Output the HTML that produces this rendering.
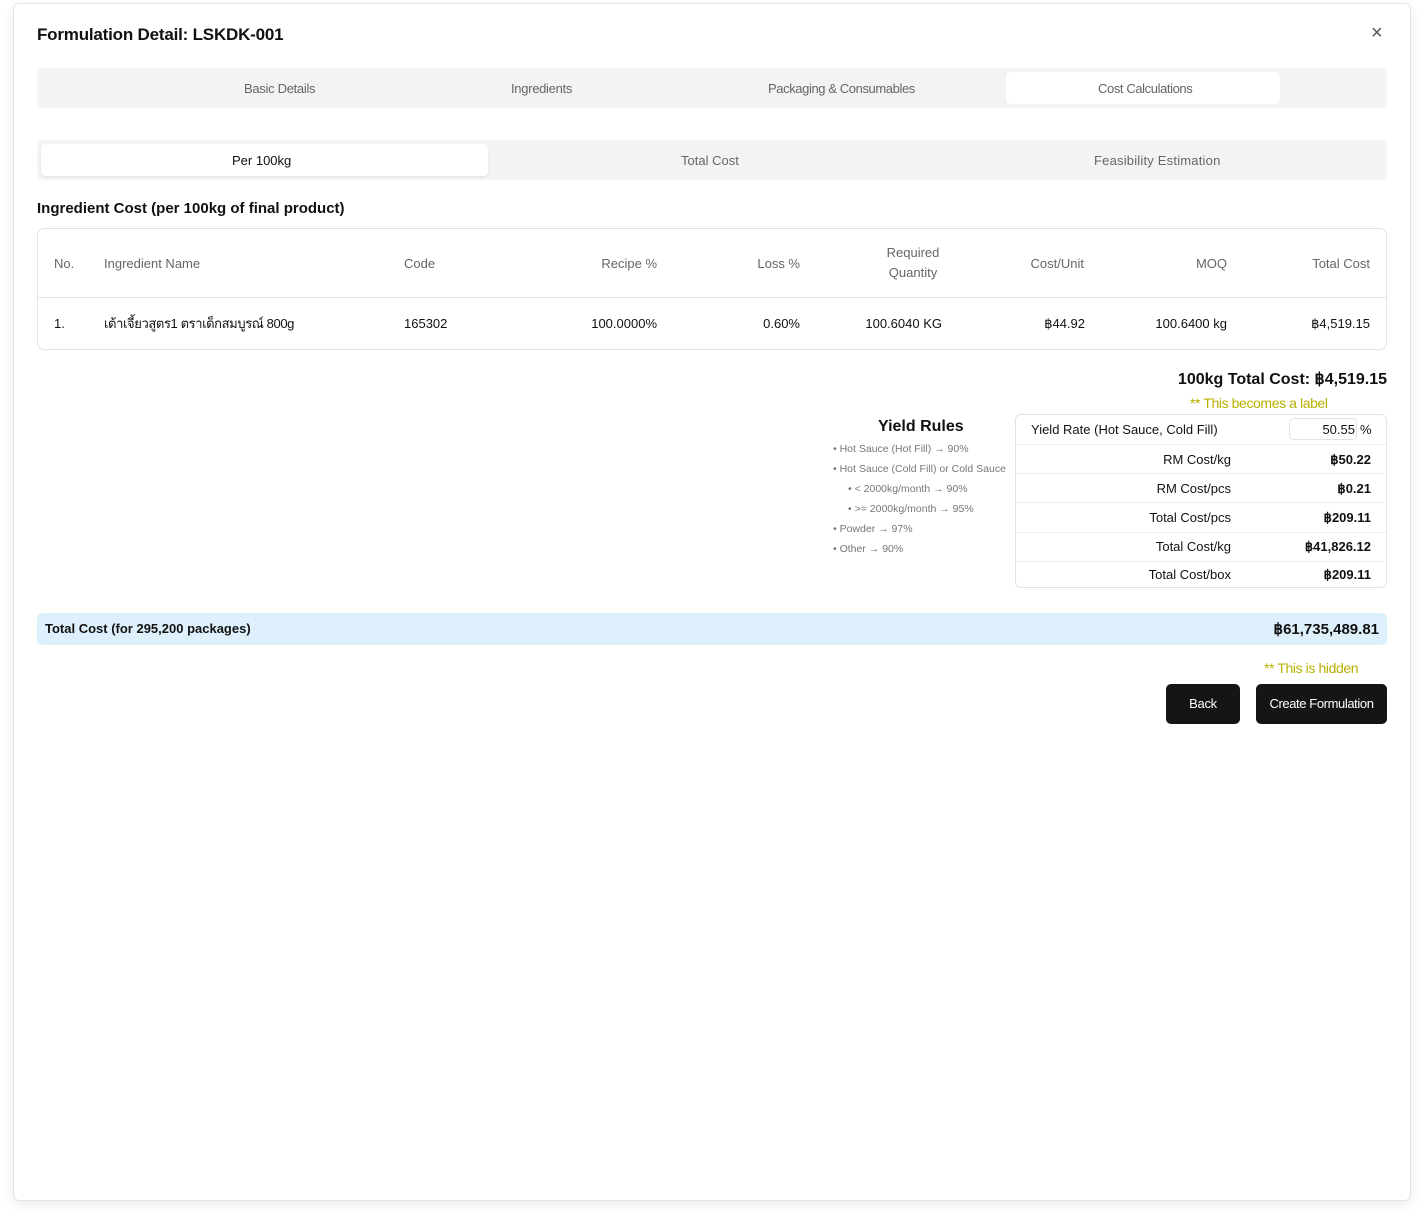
<!DOCTYPE html>
<html><head><meta charset="utf-8"><style>
*{box-sizing:border-box;margin:0;padding:0}
body{width:1424px;height:1224px;background:#fff;font-family:"Liberation Sans","Noto Sans CJK SC",sans-serif;color:#111;position:relative;overflow:hidden}
.abs{position:absolute}
.card{left:13px;top:3px;width:1398px;height:1198px;border:1px solid #e4e4e4;border-radius:6px;box-shadow:0 4px 12px rgba(0,0,0,.08);background:#fff}
.t{white-space:nowrap}
.r{text-align:right}
.g{color:#666}
</style></head><body>
<div class="abs card"></div>
<div class="abs t" style="left:37px;top:25px;font-size:17px;font-weight:bold;letter-spacing:-0.2px">Formulation Detail: LSKDK-001</div>
<div class="abs t" style="left:1371px;top:22px;font-size:20px;color:#555">×</div>
<div class="abs" style="left:37px;top:68px;width:1350px;height:40px;background:#f3f3f3;border-radius:6px"></div>
<div class="abs" style="left:1006px;top:72px;width:274px;height:32px;background:#fff;border-radius:5px"></div>
<div class="abs t g" style="left:244px;top:81px;font-size:13px;letter-spacing:-0.3px">Basic Details</div>
<div class="abs t g" style="left:511px;top:81px;font-size:13px;letter-spacing:-0.3px">Ingredients</div>
<div class="abs t g" style="left:768px;top:81px;font-size:13px;letter-spacing:-0.4px">Packaging &amp; Consumables</div>
<div class="abs t g" style="left:1098px;top:81px;font-size:13px;letter-spacing:-0.4px">Cost Calculations</div>
<div class="abs" style="left:37px;top:140px;width:1350px;height:40px;background:#f3f3f3;border-radius:6px"></div>
<div class="abs" style="left:41px;top:144px;width:447px;height:32px;background:#fff;border-radius:5px;box-shadow:0 1px 2px rgba(0,0,0,.08)"></div>
<div class="abs t" style="left:232px;top:153px;font-size:13px">Per 100kg</div>
<div class="abs t g" style="left:681px;top:153px;font-size:13px">Total Cost</div>
<div class="abs t g" style="left:1094px;top:153px;font-size:13px;letter-spacing:0.2px">Feasibility Estimation</div>
<div class="abs t" style="left:37px;top:200px;font-size:15px;font-weight:bold">Ingredient Cost (per 100kg of final product)</div>
<div class="abs" style="left:37px;top:228px;width:1350px;height:122px;border:1px solid #e2e2e2;border-radius:7px"></div>
<div class="abs" style="left:38px;top:297px;width:1348px;height:1px;background:#e2e2e2"></div>
<div style="font-size:13px;color:#666">
<div class="abs t" style="left:54px;top:256px">No.</div>
<div class="abs t" style="left:104px;top:256px">Ingredient Name</div>
<div class="abs t" style="left:404px;top:256px">Code</div>
<div class="abs t r" style="left:557px;width:100px;top:256px">Recipe %</div>
<div class="abs t r" style="left:700px;width:100px;top:256px">Loss %</div>
<div class="abs t" style="left:863px;width:100px;top:243px;text-align:center;line-height:20px">Required<br>Quantity</div>
<div class="abs t r" style="left:984px;width:100px;top:256px">Cost/Unit</div>
<div class="abs t r" style="left:1127px;width:100px;top:256px">MOQ</div>
<div class="abs t r" style="left:1270px;width:100px;top:256px">Total Cost</div>
</div>
<div style="font-size:13px;color:#111">
<div class="abs t" style="left:54px;top:316px">1.</div>
<div class="abs t" style="left:104px;top:313px;letter-spacing:-0.4px">เต้าเจี้ยวสูตร1 ตราเด็กสมบูรณ์ 800g</div>
<div class="abs t" style="left:404px;top:316px">165302</div>
<div class="abs t r" style="left:557px;width:100px;top:316px">100.0000%</div>
<div class="abs t r" style="left:700px;width:100px;top:316px">0.60%</div>
<div class="abs t r" style="left:842px;width:100px;top:316px">100.6040 KG</div>
<div class="abs t r" style="left:985px;width:100px;top:316px">฿44.92</div>
<div class="abs t r" style="left:1127px;width:100px;top:316px">100.6400 kg</div>
<div class="abs t r" style="left:1270px;width:100px;top:316px">฿4,519.15</div>
</div>
<div class="abs t r" style="left:1087px;width:300px;top:369px;font-size:16px;font-weight:bold">100kg Total Cost: ฿4,519.15</div>
<div class="abs t" style="left:1190px;top:395px;font-size:14px;color:#b8b000;letter-spacing:-0.4px">** This becomes a label</div>
<div class="abs t" style="left:878px;top:418px;font-size:16px;font-weight:bold">Yield Rules</div>
<div style="font-size:10.5px;color:#777">
<div class="abs t" style="left:833px;top:443px">• Hot Sauce (Hot Fill) → 90%</div>
<div class="abs t" style="left:833px;top:463px">• Hot Sauce (Cold Fill) or Cold Sauce</div>
<div class="abs t" style="left:848px;top:483px">• &lt; 2000kg/month → 90%</div>
<div class="abs t" style="left:848px;top:503px">• &gt;= 2000kg/month → 95%</div>
<div class="abs t" style="left:833px;top:523px">• Powder → 97%</div>
<div class="abs t" style="left:833px;top:543px">• Other → 90%</div>
</div>
<div class="abs" style="left:1015px;top:414px;width:372px;height:174px;border:1px solid #e2e2e2;border-radius:6px"></div>
<div class="abs" style="left:1016px;top:444px;width:370px;height:1px;background:#eee"></div>
<div class="abs" style="left:1016px;top:473px;width:370px;height:1px;background:#eee"></div>
<div class="abs" style="left:1016px;top:502px;width:370px;height:1px;background:#eee"></div>
<div class="abs" style="left:1016px;top:532px;width:370px;height:1px;background:#eee"></div>
<div class="abs" style="left:1016px;top:561px;width:370px;height:1px;background:#eee"></div>
<div class="abs" style="left:1289px;top:418px;width:68px;height:22px;border:1px solid #e2e2e2;border-radius:5px"></div>
<div style="font-size:13px">
<div class="abs t" style="left:1031px;top:422px">Yield Rate (Hot Sauce, Cold Fill)</div>
<div class="abs t r" style="left:1280px;width:75px;top:422px">50.55</div>
<div class="abs t" style="left:1360px;top:422px">%</div>
<div class="abs t r" style="left:1031px;width:200px;top:452px">RM Cost/kg</div>
<div class="abs t r" style="left:1031px;width:200px;top:481px">RM Cost/pcs</div>
<div class="abs t r" style="left:1031px;width:200px;top:510px">Total Cost/pcs</div>
<div class="abs t r" style="left:1031px;width:200px;top:539px">Total Cost/kg</div>
<div class="abs t r" style="left:1031px;width:200px;top:567px">Total Cost/box</div>
<div style="font-weight:bold">
<div class="abs t r" style="left:1231px;width:140px;top:452px">฿50.22</div>
<div class="abs t r" style="left:1231px;width:140px;top:481px">฿0.21</div>
<div class="abs t r" style="left:1231px;width:140px;top:510px">฿209.11</div>
<div class="abs t r" style="left:1231px;width:140px;top:539px">฿41,826.12</div>
<div class="abs t r" style="left:1231px;width:140px;top:567px">฿209.11</div>
</div></div>
<div class="abs" style="left:37px;top:613px;width:1350px;height:32px;background:#dff0fd;border-radius:5px"></div>
<div class="abs t" style="left:45px;top:621px;font-size:13px;font-weight:bold">Total Cost (for 295,200 packages)</div>
<div class="abs t r" style="left:1079px;width:300px;top:620px;font-size:15px;font-weight:bold">฿61,735,489.81</div>
<div class="abs t" style="left:1264px;top:660px;font-size:14px;color:#b8b000;letter-spacing:-0.4px">** This is hidden</div>
<div class="abs" style="left:1166px;top:684px;width:74px;height:40px;background:#151515;border-radius:5px;color:#fff;font-size:13px;text-align:center;line-height:40px;letter-spacing:-0.3px">Back</div>
<div class="abs" style="left:1256px;top:684px;width:131px;height:40px;background:#151515;border-radius:5px;color:#fff;font-size:13px;text-align:center;line-height:40px;letter-spacing:-0.4px">Create Formulation</div>
</body></html>
